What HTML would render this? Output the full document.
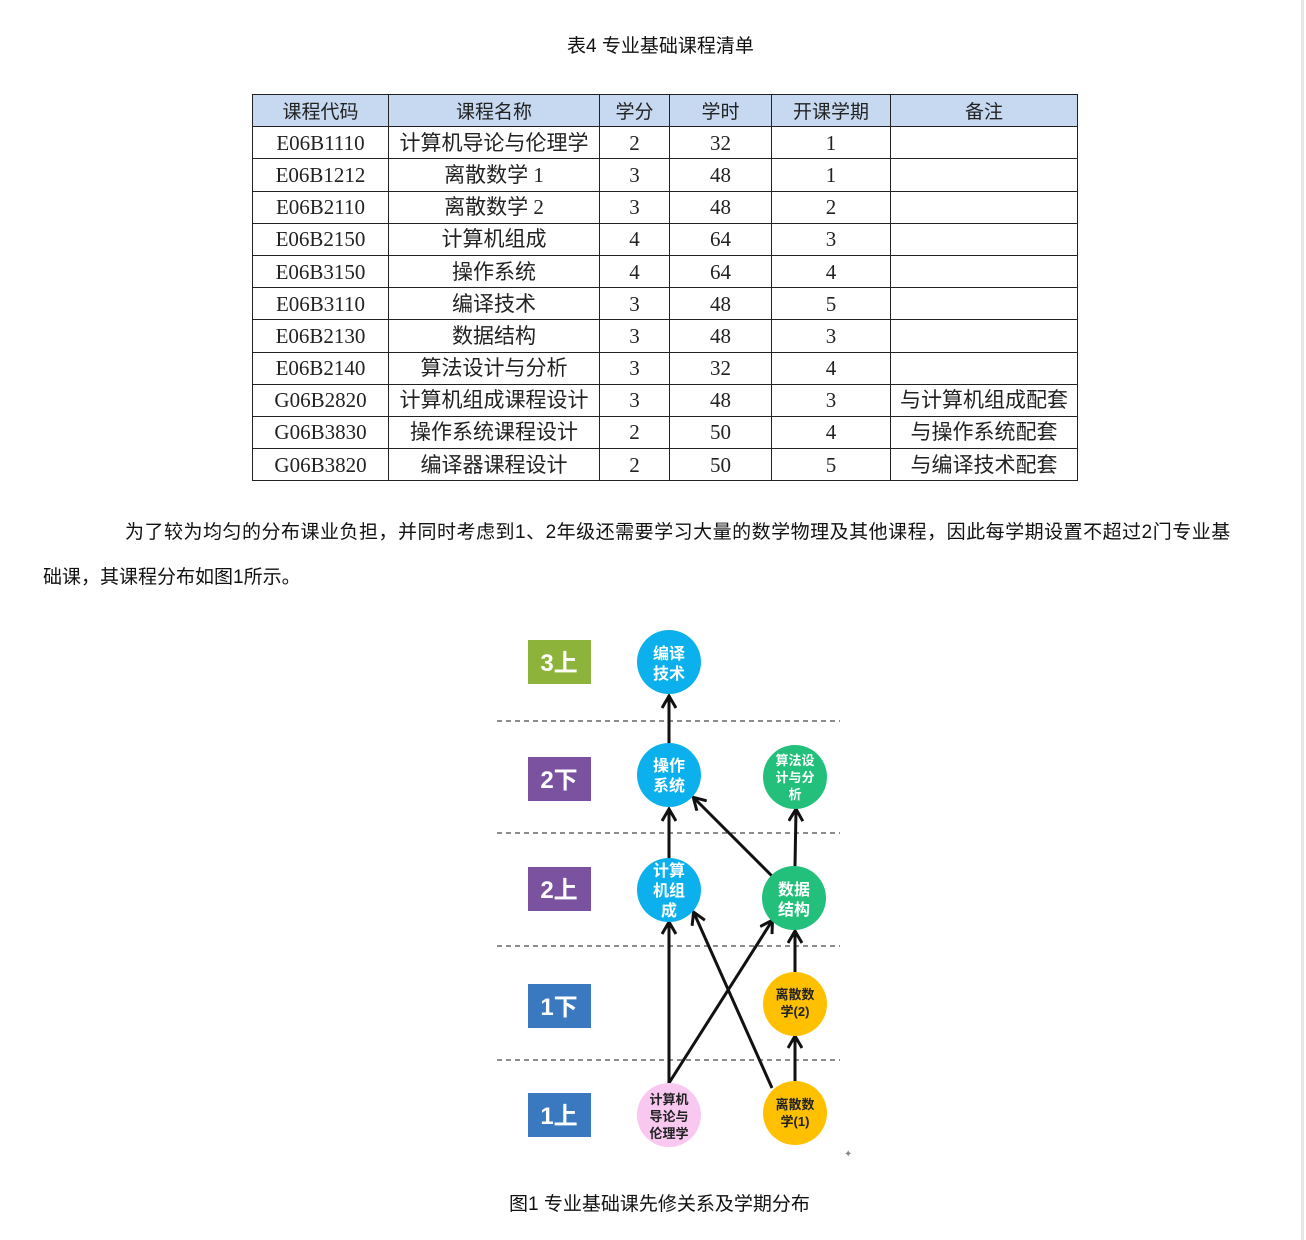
<!DOCTYPE html>
<html><head><meta charset="utf-8"><style>
body{margin:0;width:1306px;height:1240px;background:#fff;position:relative;overflow:hidden;font-family:"Liberation Sans","Noto Sans CJK SC",sans-serif;color:#111}
.t{position:absolute;white-space:nowrap;font-size:19px}
table{position:absolute;left:252px;top:94px;border-collapse:collapse;font-family:"Liberation Serif","Noto Sans CJK SC",serif;font-size:21px;color:#222}
tr{height:32.2px}
td{border:1.5px solid #222;padding:0;text-align:center;line-height:30px}
tr.h td{background:#c6d9f1;font-family:"Noto Sans CJK SC",sans-serif;font-size:19px}
.sb{position:absolute;left:1301px;top:0;width:3px;height:1240px;background:#e6e6e6}
</style></head><body>
<div class="sb"></div>
<div class="t" style="left:567px;top:31px">表4 专业基础课程清单</div>
<table>
<tr class="h"><td style="width:135px">课程代码</td><td style="width:210px">课程名称</td><td style="width:69px">学分</td><td style="width:101px">学时</td><td style="width:118px">开课学期</td><td style="width:186px">备注</td></tr>
<tr><td>E06B1110</td><td>计算机导论与伦理学</td><td>2</td><td>32</td><td>1</td><td></td></tr>
<tr><td>E06B1212</td><td>离散数学 1</td><td>3</td><td>48</td><td>1</td><td></td></tr>
<tr><td>E06B2110</td><td>离散数学 2</td><td>3</td><td>48</td><td>2</td><td></td></tr>
<tr><td>E06B2150</td><td>计算机组成</td><td>4</td><td>64</td><td>3</td><td></td></tr>
<tr><td>E06B3150</td><td>操作系统</td><td>4</td><td>64</td><td>4</td><td></td></tr>
<tr><td>E06B3110</td><td>编译技术</td><td>3</td><td>48</td><td>5</td><td></td></tr>
<tr><td>E06B2130</td><td>数据结构</td><td>3</td><td>48</td><td>3</td><td></td></tr>
<tr><td>E06B2140</td><td>算法设计与分析</td><td>3</td><td>32</td><td>4</td><td></td></tr>
<tr><td>G06B2820</td><td>计算机组成课程设计</td><td>3</td><td>48</td><td>3</td><td>与计算机组成配套</td></tr>
<tr><td>G06B3830</td><td>操作系统课程设计</td><td>2</td><td>50</td><td>4</td><td>与操作系统配套</td></tr>
<tr><td>G06B3820</td><td>编译器课程设计</td><td>2</td><td>50</td><td>5</td><td>与编译技术配套</td></tr>
</table>
<div class="t" style="left:125px;top:517px;letter-spacing:0.5px">为了较为均匀的分布课业负担，并同时考虑到1、2年级还需要学习大量的数学物理及其他课程，因此每学期设置不超过2门专业基</div>
<div class="t" style="left:43px;top:562px">础课，其课程分布如图1所示。</div>
<svg style="position:absolute;left:0;top:0" width="1306" height="1240" font-family="Liberation Sans,Noto Sans CJK SC,sans-serif">
<defs><marker id="b" markerWidth="16" markerHeight="16" refX="12" refY="8" orient="auto" markerUnits="userSpaceOnUse" viewBox="0 0 16 16"><path d="M1,1 L13,8 L1,15" fill="none" stroke="#111" stroke-width="3"/></marker></defs>
<g stroke="#666" stroke-width="1.5" stroke-dasharray="5,4"><line x1="497" y1="721" x2="840" y2="721"/><line x1="497" y1="833" x2="840" y2="833"/><line x1="497" y1="946" x2="840" y2="946"/><line x1="497" y1="1060" x2="840" y2="1060"/></g>
<g font-size="24" fill="#fff" font-weight="bold" text-anchor="middle">
<rect x="528" y="640" width="63" height="44" fill="#8db33a"/><text x="559" y="671">3上</text>
<rect x="528" y="757" width="63" height="44" fill="#7a52a0"/><text x="559" y="788">2下</text>
<rect x="528" y="867" width="63" height="44" fill="#7a52a0"/><text x="559" y="898">2上</text>
<rect x="528" y="984" width="63" height="44" fill="#3a78c0"/><text x="559" y="1015">1下</text>
<rect x="528" y="1093" width="63" height="44" fill="#3a78c0"/><text x="559" y="1124">1上</text>
</g>
<g stroke="#111" stroke-width="3" fill="none" marker-end="url(#b)">
<line x1="669" y1="743" x2="669" y2="697"/>
<line x1="669" y1="858" x2="669" y2="810"/>
<line x1="772" y1="876" x2="694" y2="798"/>
<line x1="795" y1="866" x2="796" y2="810"/>
<line x1="795" y1="972" x2="795" y2="932"/>
<line x1="795" y1="1081" x2="795" y2="1037"/>
<line x1="669" y1="1083" x2="669" y2="923"/>
<line x1="669" y1="1083" x2="772" y2="921"/>
<line x1="772" y1="1088" x2="694" y2="913"/>
</g>
<g font-weight="bold" text-anchor="middle">
<circle cx="669" cy="662" r="32" fill="#0bb0ec"/><text x="669" y="659" font-size="16" fill="#fff">编译</text><text x="669" y="679" font-size="16" fill="#fff">技术</text>
<circle cx="669" cy="775" r="32" fill="#0bb0ec"/><text x="669" y="771" font-size="16" fill="#fff">操作</text><text x="669" y="791" font-size="16" fill="#fff">系统</text>
<circle cx="795" cy="777" r="32" fill="#22c07a"/><text x="795" y="765" font-size="13" fill="#fff">算法设</text><text x="795" y="782" font-size="13" fill="#fff">计与分</text><text x="795" y="799" font-size="13" fill="#fff">析</text>
<circle cx="669" cy="890" r="32" fill="#0bb0ec"/><text x="669" y="876" font-size="16" fill="#fff">计算</text><text x="669" y="896" font-size="16" fill="#fff">机组</text><text x="669" y="916" font-size="16" fill="#fff">成</text>
<circle cx="794" cy="898" r="32" fill="#22c07a"/><text x="794" y="895" font-size="16" fill="#fff">数据</text><text x="794" y="915" font-size="16" fill="#fff">结构</text>
<circle cx="795" cy="1004" r="32" fill="#ffc000"/><text x="795" y="999" font-size="13" fill="#222">离散数</text><text x="795" y="1016" font-size="13" fill="#222">学(2)</text>
<circle cx="669" cy="1115" r="32" fill="#f8c8f0"/><text x="669" y="1104" font-size="13" fill="#222">计算机</text><text x="669" y="1121" font-size="13" fill="#222">导论与</text><text x="669" y="1138" font-size="13" fill="#222">伦理学</text>
<circle cx="795" cy="1113" r="32" fill="#ffc000"/><text x="795" y="1109" font-size="13" fill="#222">离散数</text><text x="795" y="1126" font-size="13" fill="#222">学(1)</text>
</g>
<text x="844" y="1157" font-size="10" fill="#888">✦</text>
</svg>
<div class="t" style="left:509px;top:1189px">图1 专业基础课先修关系及学期分布</div>
</body></html>
